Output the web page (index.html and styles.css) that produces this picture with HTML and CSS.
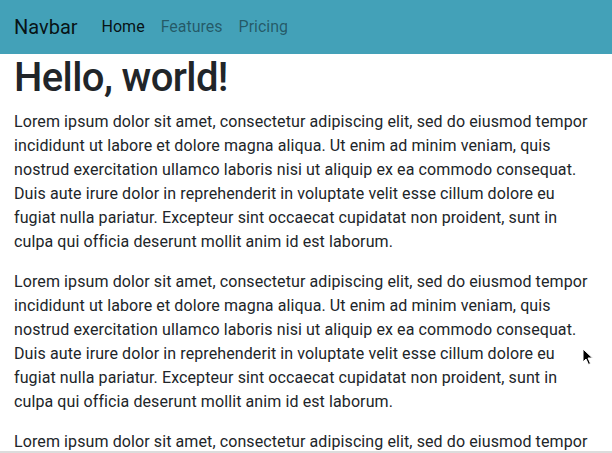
FILE: index.html
```html
<!DOCTYPE html>
<html lang="en">
<head>
  <meta charset="UTF-8" />
  <meta name="viewport" content="width=device-width, initial-scale=1.0"/>
  <title>Hello, world!</title>
  <link rel="stylesheet" href="styles.css">
</head>
<body>
  <nav class="navbar">
    <a class="navbar-brand" href="#">Navbar</a>
    <ul class="navbar-nav">
      <li class="nav-item active"><a href="#">Home</a></li>
      <li class="nav-item"><a href="#">Features</a></li>
      <li class="nav-item"><a href="#">Pricing</a></li>
    </ul>
  </nav>

  <main class="container">
    <h1>Hello, world!</h1>
    <p>Lorem ipsum dolor sit amet, consectetur adipiscing elit, sed do eiusmod tempor incididunt ut labore et dolore magna aliqua. Ut enim ad minim veniam, quis nostrud exercitation ullamco laboris nisi ut aliquip ex ea commodo consequat. Duis aute irure dolor in reprehenderit in voluptate velit esse cillum dolore eu fugiat nulla pariatur. Excepteur sint occaecat cupidatat non proident, sunt in culpa qui officia deserunt mollit anim id est laborum.</p>
    <p>Lorem ipsum dolor sit amet, consectetur adipiscing elit, sed do eiusmod tempor incididunt ut labore et dolore magna aliqua. Ut enim ad minim veniam, quis nostrud exercitation ullamco laboris nisi ut aliquip ex ea commodo consequat. Duis aute irure dolor in reprehenderit in voluptate velit esse cillum dolore eu fugiat nulla pariatur. Excepteur sint occaecat cupidatat non proident, sunt in culpa qui officia deserunt mollit anim id est laborum.</p>
    <p>Lorem ipsum dolor sit amet, consectetur adipiscing elit, sed do eiusmod tempor incididunt ut labore et dolore magna aliqua. Ut enim ad minim veniam, quis nostrud exercitation ullamco laboris nisi ut aliquip ex ea commodo consequat.</p>
  </main>

  <svg class="cursor" width="12" height="18" viewBox="0 0 12 18">
    <path d="M1 1 L1 14 L4 11 L6.5 16.5 L8.5 15.5 L6 10 L10.5 10 Z" fill="#000" stroke="#fff" stroke-width="1"/>
  </svg>
</body>
</html>
```

FILE: styles.css
```css
* {
  box-sizing: border-box;
}

html, body {
  height: 100%;
  overflow: hidden;
}

body {
  margin: 0;
  font-family: Roboto, "Noto Sans", "Liberation Sans", sans-serif;
  font-size: 16px;
  line-height: 1.5;
  color: #212529;
  background: #fff;
  border-bottom: 2px solid #dcdcdc;
}

.navbar {
  display: flex;
  align-items: center;
  height: 54px;
  padding: 0 14px;
  background: #43a1b8;
}

.navbar a {
  text-decoration: none;
}

.navbar-brand {
  font-size: 20px;
  color: rgba(0, 0, 0, 0.9);
  margin-right: 16px;
}

.navbar-nav {
  display: flex;
  list-style: none;
  margin: 0;
  padding: 0;
}

.nav-item a {
  display: block;
  padding: 0 8px;
  color: rgba(0, 0, 0, 0.45);
}

.nav-item.active a {
  color: rgba(0, 0, 0, 0.9);
}

.container {
  padding: 0 14px;
}

h1 {
  font-size: 40px;
  font-weight: 500;
  line-height: 1.2;
  letter-spacing: -0.6px;
  margin: 0 0 8px;
}

p {
  margin: 0 0 16px;
  letter-spacing: 0.1px;
}

.cursor {
  position: absolute;
  left: 582px;
  top: 348px;
}
```
